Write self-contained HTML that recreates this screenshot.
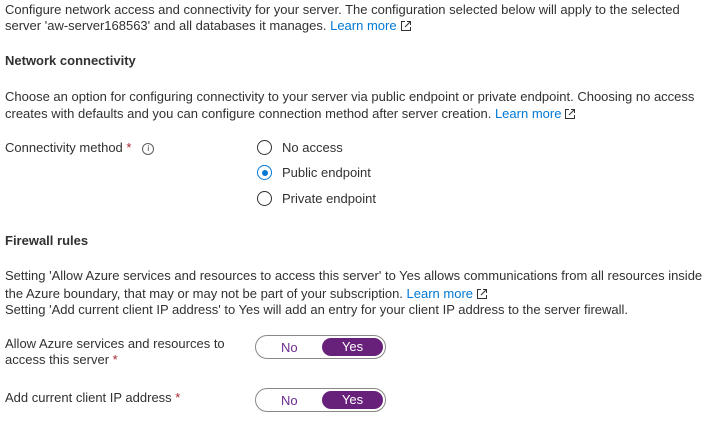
<!DOCTYPE html>
<html><head><meta charset="utf-8"><style>
body{margin:0;background:#fff;width:704px;height:426px;overflow:hidden;font-family:"Liberation Sans",sans-serif;font-size:13px;color:#323130;position:relative}
.t{position:absolute;left:5px;white-space:nowrap;line-height:16px}
a{color:#0078d4;text-decoration:none}
svg.ext{margin-left:4px;vertical-align:-1px}
.h{font-weight:bold;font-size:13px}
.r{position:absolute;left:257px;width:15px;height:15px;border:1px solid #323130;border-radius:50%;box-sizing:border-box}
.rl{position:absolute;left:282px;white-space:nowrap;line-height:16px}
.star{color:#a4262c}
.tg{position:absolute;left:255px;width:131px;height:24px;border:1px solid #8a8886;border-radius:12px;box-sizing:border-box}
.tg .no{position:absolute;left:25px;top:4px;color:#6b2c91}
.tg .yes{position:absolute;left:66px;top:2px;width:61px;height:18px;background:#68217a;border-radius:9px;color:#fff;text-align:center;line-height:18px}
</style></head><body>
<div class="t" style="top:2px">Configure network access and connectivity for your server. The configuration selected below will apply to the selected</div>
<div class="t" style="top:18px">server 'aw-server168563' and all databases it manages. <a>Learn more</a><svg class="ext" width="10" height="10" viewBox="0 0 10 10" fill="none" stroke="#323130" stroke-width="1"><path d="M4 .5H.5v9h9V6M6 .5h3.5V4M9.5.5L4 6"/></svg></div>
<div class="t h" style="top:53px">Network connectivity</div>
<div class="t" style="top:89px">Choose an option for configuring connectivity to your server via public endpoint or private endpoint. Choosing no access</div>
<div class="t" style="top:106px">creates with defaults and you can configure connection method after server creation. <a>Learn more</a><svg class="ext" width="10" height="10" viewBox="0 0 10 10" fill="none" stroke="#323130" stroke-width="1"><path d="M4 .5H.5v9h9V6M6 .5h3.5V4M9.5.5L4 6"/></svg></div>
<div class="t" style="top:140px">Connectivity method <span class="star">*</span> &nbsp;&nbsp;<span style="display:inline-block;width:10px;height:10px;border:1px solid #605e5c;border-radius:50%;font-size:8px;text-align:center;line-height:10px;vertical-align:middle">i</span></div>
<div class="r" style="top:140px"></div><div class="rl" style="top:140px">No access</div>
<div class="r" style="top:165px;border-color:#0078d4"><div style="position:absolute;left:3.5px;top:3.5px;width:6px;height:6px;border-radius:50%;background:#0078d4"></div></div><div class="rl" style="top:165px">Public endpoint</div>
<div class="r" style="top:191px"></div><div class="rl" style="top:191px">Private endpoint</div>
<div class="t h" style="top:233px">Firewall rules</div>
<div class="t" style="top:268px">Setting 'Allow Azure services and resources to access this server' to Yes allows communications from all resources inside</div>
<div class="t" style="top:286px">the Azure boundary, that may or may not be part of your subscription. <a>Learn more</a><svg class="ext" width="10" height="10" viewBox="0 0 10 10" fill="none" stroke="#323130" stroke-width="1"><path d="M4 .5H.5v9h9V6M6 .5h3.5V4M9.5.5L4 6"/></svg></div>
<div class="t" style="top:302px">Setting 'Add current client IP address' to Yes will add an entry for your client IP address to the server firewall.</div>
<div class="t" style="top:336px">Allow Azure services and resources to</div>
<div class="t" style="top:352px">access this server <span class="star">*</span></div>
<div class="tg" style="top:335px"><span class="no">No</span><span class="yes">Yes</span></div>
<div class="t" style="top:390px">Add current client IP address <span class="star">*</span></div>
<div class="tg" style="top:388px"><span class="no">No</span><span class="yes">Yes</span></div>
</body></html>
